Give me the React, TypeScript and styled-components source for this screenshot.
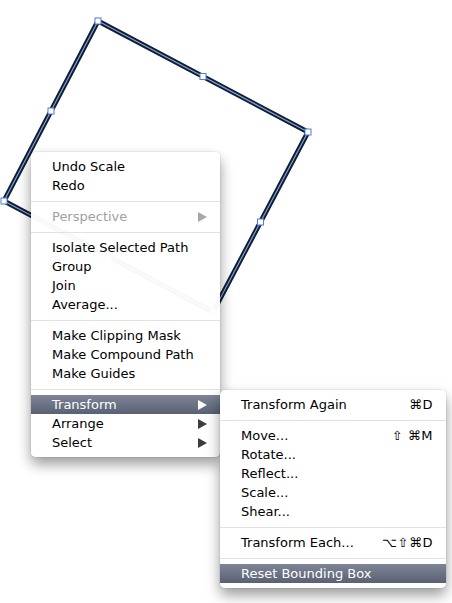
import React from 'react';
import styled, { createGlobalStyle, css } from 'styled-components';

const GlobalStyle = createGlobalStyle`
  html, body {
    margin: 0;
    padding: 0;
    background: #ffffff;
  }
  body {
    font-family: "DejaVu Sans", "Liberation Sans", sans-serif;
  }
`;

type Entry =
  | { kind: 'item'; label: string; shortcut?: string; sub?: boolean; disabled?: boolean; active?: boolean }
  | { kind: 'sep' };

const mainItems: Entry[] = [
  { kind: 'item', label: 'Undo Scale' },
  { kind: 'item', label: 'Redo' },
  { kind: 'sep' },
  { kind: 'item', label: 'Perspective', sub: true, disabled: true },
  { kind: 'sep' },
  { kind: 'item', label: 'Isolate Selected Path' },
  { kind: 'item', label: 'Group' },
  { kind: 'item', label: 'Join' },
  { kind: 'item', label: 'Average...' },
  { kind: 'sep' },
  { kind: 'item', label: 'Make Clipping Mask' },
  { kind: 'item', label: 'Make Compound Path' },
  { kind: 'item', label: 'Make Guides' },
  { kind: 'sep' },
  { kind: 'item', label: 'Transform', sub: true, active: true },
  { kind: 'item', label: 'Arrange', sub: true },
  { kind: 'item', label: 'Select', sub: true },
];

const subItems: Entry[] = [
  { kind: 'item', label: 'Transform Again', shortcut: '⌘D' },
  { kind: 'sep' },
  { kind: 'item', label: 'Move...', shortcut: '⇧ ⌘M' },
  { kind: 'item', label: 'Rotate...' },
  { kind: 'item', label: 'Reflect...' },
  { kind: 'item', label: 'Scale...' },
  { kind: 'item', label: 'Shear...' },
  { kind: 'sep' },
  { kind: 'item', label: 'Transform Each...', shortcut: '⌥⇧⌘D' },
  { kind: 'sep' },
  { kind: 'item', label: 'Reset Bounding Box', active: true },
];

const Canvas = styled.div`
  position: relative;
  width: 452px;
  height: 603px;
  overflow: hidden;
  background: #ffffff;
`;

const Artwork = styled.svg`
  position: absolute;
  left: 0;
  top: 0;
`;

const MenuPanel = styled.div<{ $left: number; $top: number; $width: number }>`
  position: absolute;
  left: ${p => p.$left}px;
  top: ${p => p.$top}px;
  width: ${p => p.$width}px;
  padding: 5px 0;
  background: rgba(255, 255, 255, 0.97);
  border-radius: 5px;
  box-shadow: 0 0 0 1px rgba(0, 0, 0, 0.05), 0 7px 14px rgba(0, 0, 0, 0.4);
  display: flex;
  flex-direction: column;
`;

const Row = styled.div<{ $active?: boolean; $disabled?: boolean; $indent: number }>`
  height: 19px;
  display: flex;
  align-items: center;
  padding: 0 13px 0 ${p => p.$indent}px;
  font-size: 13px;
  color: ${p => (p.$disabled ? '#a0a0a0' : '#000000')};
  white-space: nowrap;
  ${p =>
    p.$active &&
    css`
      color: #ffffff;
      background: linear-gradient(#7d8596, #596172);
    `}
`;

const Label = styled.span`
  flex: 1;
`;

const Shortcut = styled.span`
  font-size: 13px;
  letter-spacing: 0.5px;
  white-space: pre;
`;

const Arrow = styled.span<{ $active?: boolean; $disabled?: boolean }>`
  width: 0;
  height: 0;
  border-top: 5px solid transparent;
  border-bottom: 5px solid transparent;
  border-left: 9px solid
    ${p => (p.$active ? '#ffffff' : p.$disabled ? '#a8a8a8' : '#3c3c3c')};
`;

const Separator = styled.div`
  height: 12px;
  display: flex;
  align-items: center;
  &::after {
    content: '';
    flex: 1;
    height: 1px;
    background: #e2e2e2;
  }
`;

const Menu: React.FC<{ items: Entry[]; left: number; top: number; width: number; indent: number }> = ({
  items,
  left,
  top,
  width,
  indent,
}) => (
  <MenuPanel $left={left} $top={top} $width={width}>
    {items.map((it, i) =>
      it.kind === 'sep' ? (
        <Separator key={i} />
      ) : (
        <Row key={i} $active={it.active} $disabled={it.disabled} $indent={indent}>
          <Label>{it.label}</Label>
          {it.shortcut && <Shortcut>{it.shortcut}</Shortcut>}
          {it.sub && <Arrow $active={it.active} $disabled={it.disabled} />}
        </Row>
      )
    )}
  </MenuPanel>
);

const corners = [
  [98, 21],
  [308, 132],
  [213, 312],
  [4, 201],
];

const Anchor: React.FC<{ x: number; y: number }> = ({ x, y }) => (
  <rect x={x - 3} y={y - 3} width={6} height={6} fill="#ffffff" stroke="#4d7fd6" strokeWidth={1} />
);

export default function App() {
  const pts = corners.map(c => c.join(',')).join(' ');
  const mids = corners.map((c, i) => {
    const n = corners[(i + 1) % 4];
    return [(c[0] + n[0]) / 2, (c[1] + n[1]) / 2];
  });
  return (
    <>
      <GlobalStyle />
      <Canvas>
        <Artwork width={452} height={603} viewBox="0 0 452 603">
          <polygon points={pts} fill="none" stroke="#141b2b" strokeWidth={5} strokeLinejoin="miter" />
          <polygon points={pts} fill="none" stroke="#74a2ea" strokeWidth={1.2} />
          {corners.map((c, i) => (
            <Anchor key={'c' + i} x={c[0]} y={c[1]} />
          ))}
          {mids.map((c, i) => (
            <Anchor key={'m' + i} x={c[0]} y={c[1]} />
          ))}
        </Artwork>
        <Menu items={mainItems} left={31} top={152} width={189} indent={21} />
        <Menu items={subItems} left={220} top={390} width={226} indent={21} />
      </Canvas>
    </>
  );
}
